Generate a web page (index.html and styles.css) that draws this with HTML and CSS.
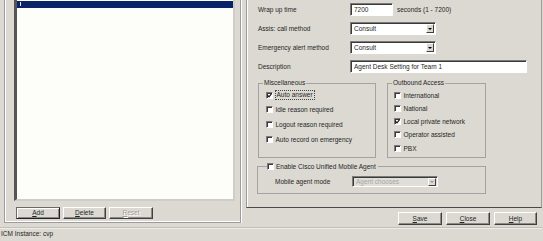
FILE: index.html
```html
<!DOCTYPE html>
<html>
<head>
<meta charset="utf-8">
<link rel="stylesheet" href="styles.css">
</head>
<body>
<div class="main">
  <div class="left">
    <div class="lgroup">
      <div class="list">
        <div class="row-sel"><span class="tick"></span></div>
      </div>
      <div class="btns">
        <button class="btn focus"><u>A</u>dd</button>
        <button class="btn w43"><u>D</u>elete</button>
        <button class="btn dis"><u>R</u>eset</button>
      </div>
    </div>
  </div>
  <div class="right">
    <div class="rframe">
      <div class="form">
        <span class="lbl">Wrap up time</span>
        <div class="ctl"><div class="field w43">7200</div><span class="hint">seconds (1 - 7200)</span></div>
        <span class="lbl">Assis: call method</span>
        <div class="ctl"><div class="field select w86"><span>Consult</span><span class="drop"><i class="tri"></i></span></div></div>
        <span class="lbl">Emergency alert method</span>
        <div class="ctl"><div class="field select w86"><span>Consult</span><span class="drop"><i class="tri"></i></span></div></div>
        <span class="lbl">Description</span>
        <div class="ctl"><div class="field w177">Agent Desk Setting for Team 1</div></div>
      </div>
      <div class="groups">
        <fieldset class="gb misc">
          <legend>Miscellaneous</legend>
          <div class="items misc-items">
            <div class="item"><span class="cb"><svg width="5" height="5" viewBox="0 0 5 5"><path d="M0.5 2.2 L2 3.8 L4.6 0.6" fill="none" stroke="#111" stroke-width="1.1"/></svg></span><span class="focus-txt">Auto answer</span></div>
            <div class="item"><span class="cb"></span><span>Idle reason required</span></div>
            <div class="item"><span class="cb"></span><span>Logout reason required</span></div>
            <div class="item"><span class="cb"></span><span>Auto record on emergency</span></div>
          </div>
        </fieldset>
        <fieldset class="gb outb">
          <legend>Outbound Access</legend>
          <div class="items outb-items">
            <div class="item"><span class="cb"></span><span>International</span></div>
            <div class="item"><span class="cb"></span><span>National</span></div>
            <div class="item"><span class="cb"><svg width="5" height="5" viewBox="0 0 5 5"><path d="M0.5 2.2 L2 3.8 L4.6 0.6" fill="none" stroke="#111" stroke-width="1.1"/></svg></span><span>Local private network</span></div>
            <div class="item"><span class="cb"></span><span>Operator assisted</span></div>
            <div class="item"><span class="cb"></span><span>PBX</span></div>
          </div>
        </fieldset>
      </div>
      <fieldset class="gb mobile">
        <legend class="mleg"><span class="cb"></span><span>Enable Cisco Unified Mobile Agent</span></legend>
        <div class="mrow">
          <span class="mlbl">Mobile agent mode</span>
          <div class="field select w86 disabled"><span>Agent chooses</span><span class="drop"><i class="tri"></i></span></div>
        </div>
      </fieldset>
    </div>
    <div class="actions">
      <button class="btn"><u>S</u>ave</button>
      <button class="btn"><u>C</u>lose</button>
      <button class="btn w43"><u>H</u>elp</button>
    </div>
  </div>
</div>
<div class="status">ICM Instance: cvp</div>
</body>
</html>
```

FILE: styles.css
```css
html, body {
  margin: 0;
  padding: 0;
}
body {
  width: 543px;
  height: 241px;
  overflow: hidden;
  background: #dbd9d2;
  font-family: "Liberation Sans", Arial, sans-serif;
  font-size: 6.5px;
  color: #262626;
}
.main {
  display: flex;
  height: 227px;
}
.left {
  width: 246px;
  padding: 0 5px 0 4px;
  box-sizing: border-box;
  flex: none;
}
.lgroup {
  height: 223px;
  box-sizing: border-box;
  border: 1px solid #9c9c9c;
  border-top: 0;
  box-shadow: inset 1px 0 #fff, inset 0 -1px #fff, 1px 0 #fff;
  padding: 0 0 3px 9px;
  display: flex;
  flex-direction: column;
}
.list {
  width: 221px;
  height: 201px;
  box-sizing: border-box;
  background: #fdfdf9;
  border-style: solid;
  border-width: 0 2px 2px 3px;
  border-color: #404040 #cfcdc6 #cfcdc6 #555;
  padding-top: 1px;
}
.row-sel {
  height: 7px;
  background: #0a246a;
}
.tick {
  display: block;
  width: 1px;
  height: 4px;
  margin-left: 3px;
  padding-top: 1px;
  background: #e8e8f0;
  background-clip: content-box;
}
.btns {
  display: flex;
  gap: 3px;
  margin-top: 6px;
  padding-left: 2px;
}
.btn {
  width: 44px;
  height: 12px;
  box-sizing: border-box;
  font: inherit;
  color: #262626;
  padding: 0;
  margin: 0;
  background: #dbd9d2;
  border: 1px solid;
  border-color: #fff #404040 #404040 #fff;
  box-shadow: inset -1px -1px #8a8a8a;
  line-height: 10px;
  text-align: center;
}
.btn.w43 { width: 43px; }
.btn.focus {
  border-color: #6a6a6a #222 #222 #6a6a6a;
  box-shadow: inset 1px 1px #fff, inset -1px -1px #8a8a8a;
}
.btn.dis {
  color: #a09e98;
  text-shadow: 1px 1px #fff;
}
.right {
  flex: 1;
  display: flex;
  flex-direction: column;
}
.rframe {
  height: 208px;
  box-sizing: border-box;
  border-left: 1px solid #9c9c9c;
  border-right: 1px solid #9c9c9c;
  border-bottom: 1px solid #4a4a4a;
  margin-right: 1px;
  box-shadow: inset 1px 0 #fff;
}
.form {
  display: grid;
  grid-template-columns: 92px 1fr;
  grid-auto-rows: 13px;
  row-gap: 6px;
  padding: 3px 0 0 11px;
  align-items: center;
}
.lbl {
  line-height: 13px;
  white-space: nowrap;
}
.ctl {
  display: flex;
  align-items: center;
  gap: 4px;
  height: 13px;
}
.field {
  background: #fff;
  height: 13px;
  box-sizing: border-box;
  border: 1px solid;
  border-color: #7a7a7a #fff #fff #7a7a7a;
  box-shadow: inset 1px 1px #3a3a3a;
  padding-left: 3px;
  line-height: 11px;
  white-space: nowrap;
}
.w43 { width: 43px; }
.w86 { width: 86px; }
.w177 { width: 177px; }
.select {
  display: flex;
  align-items: center;
  padding-right: 1px;
}
.drop {
  margin-left: auto;
  width: 8px;
  height: 9px;
  box-sizing: border-box;
  background: #dbd9d2;
  border: 1px solid;
  border-color: #fff #404040 #404040 #fff;
  display: flex;
  align-items: center;
  justify-content: center;
}
.tri {
  display: block;
  width: 0;
  height: 0;
  border-left: 2px solid transparent;
  border-right: 2px solid transparent;
  border-top: 2px solid #000;
}
.field.disabled {
  height: 11px;
  background: #e0ded8;
  color: #a9a7a0;
  line-height: 9px;
}
.field.disabled .drop {
  height: 8px;
}
.field.disabled .tri {
  border-top-color: #9a9890;
}
.groups {
  display: flex;
  gap: 11px;
  margin: 6px 0 0 11px;
}
fieldset.gb {
  margin: 0;
  padding: 0;
  min-inline-size: 0;
  border: 1px solid #a3a3a3;
  box-sizing: border-box;
}
fieldset.gb legend {
  padding: 0 1px;
  margin-left: 4px;
  line-height: 8px;
}
.misc { width: 118px; height: 79px; }
.outb { width: 99px; height: 79px; }
.items {
  display: flex;
  flex-direction: column;
  padding-top: 3.5px;
}
.misc-items { gap: 5.7px; padding-left: 7px; }
.outb-items { gap: 4.3px; padding-left: 6px; }
.item {
  display: flex;
  align-items: center;
  gap: 2.5px;
  height: 9px;
  white-space: nowrap;
}
.cb {
  width: 7px;
  height: 7px;
  flex: none;
  box-sizing: border-box;
  background: #fff;
  border: 1px solid;
  border-color: #7a7a7a #fff #fff #7a7a7a;
  box-shadow: inset 1px 1px #3a3a3a;
  display: flex;
  align-items: center;
  justify-content: center;
}
.cb svg { display: block; }
.focus-txt {
  outline: 1px dotted #444;
  padding: 0 1px;
  line-height: 8px;
}
.mobile {
  width: 229px;
  height: 32px;
  margin: 4px 0 0 10px !important;
}
fieldset.gb legend.mleg {
  margin-left: 9px;
  padding: 0 2px 0 0;
  display: flex;
  align-items: center;
  gap: 2px;
  line-height: 9px;
  white-space: nowrap;
}
.mrow {
  display: flex;
  align-items: center;
  padding: 5px 0 0 17px;
}
.mlbl {
  width: 77px;
  white-space: nowrap;
}
.actions {
  display: flex;
  justify-content: flex-end;
  gap: 4px;
  margin-top: 4px;
  padding-right: 6px;
}
.actions .btn {
  height: 13px;
  line-height: 11px;
}
.status {
  border-top: 1px solid #c2c0b8;
  box-shadow: inset 0 1px #eeece6;
  height: 14px;
  padding-left: 1px;
  line-height: 11px;
  white-space: nowrap;
}
```
